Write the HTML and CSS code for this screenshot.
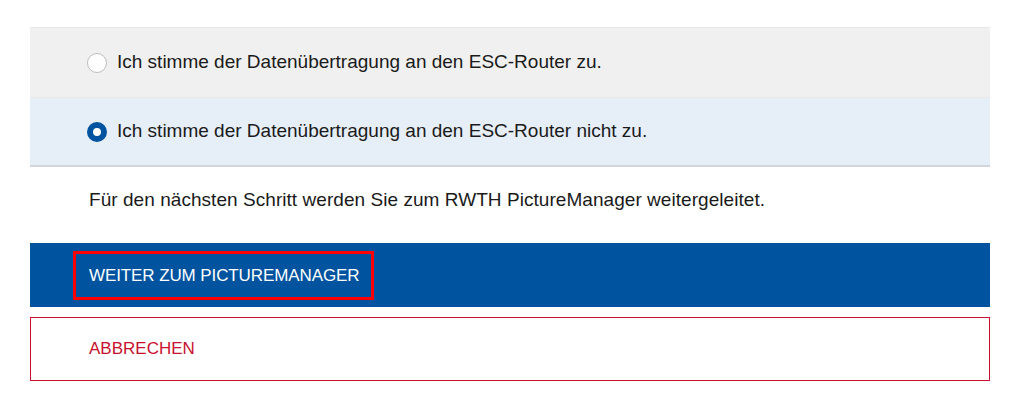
FILE: index.html
```html
<!DOCTYPE html>
<html lang="de">
<head>
<meta charset="utf-8">
<link rel="stylesheet" href="styles.css">
</head>
<body>
<main class="panel">
  <div class="options">
    <label class="option option-off">
      <span class="radio"></span>
      <span class="label-text">Ich stimme der Datenübertragung an den ESC-Router zu.</span>
    </label>
    <label class="option option-on">
      <span class="radio radio-checked"></span>
      <span class="label-text">Ich stimme der Datenübertragung an den ESC-Router nicht zu.</span>
    </label>
  </div>
  <p class="info">Für den nächsten Schritt werden Sie zum RWTH PictureManager weitergeleitet.</p>
  <div class="btn btn-primary"><span class="focus">WEITER ZUM PICTUREMANAGER</span></div>
  <div class="btn btn-cancel"><span class="cancel-text">ABBRECHEN</span></div>
</main>
</body>
</html>
```
FILE: styles.css
```css
html, body {
  margin: 0;
  padding: 0;
  background: #ffffff;
}
body {
  font-family: "Liberation Sans", Arial, sans-serif;
  font-size: 16px;
  color: #1a1a1a;
}
.panel {
  margin: 0 21px 0 30px;
  padding-top: 27px;
}
.options {
  display: flex;
  flex-direction: column;
  border-bottom: 2px solid #d2d6da;
}
.option {
  display: flex;
  align-items: center;
  gap: 10px;
  padding-left: 57px;
}
.option-off {
  background: #f0f0f0;
  border-top: 1px solid #e9e9e9;
  border-bottom: 1px solid #e8e8e8;
  box-sizing: border-box;
  height: 71px;
}
.option-on {
  background: #e6eef8;
  height: 67px;
}
.radio {
  width: 20px;
  height: 20px;
  box-sizing: border-box;
  border-radius: 50%;
  border: 1px solid #bdbdbd;
  background: #ffffff;
  flex: none;
}
.radio-checked {
  border: 6px solid #00539f;
}
.label-text {
  font-size: 19px;
  line-height: 20px;
  padding-bottom: 1px;
}
.info {
  margin: 0;
  padding: 22px 0 0 59px;
  font-size: 19px;
  letter-spacing: 0.05px;
  line-height: 22px;
  height: 54px;
}
.btn {
  display: flex;
  align-items: center;
  box-sizing: border-box;
  font-size: 17px;
}
.btn-primary {
  background: #00539f;
  height: 64px;
  padding-left: 43px;
  color: #ffffff;
}
.focus {
  border: 3px solid #ff0000;
  padding: 12px 12px 12px 13px;
  line-height: 19px;
  letter-spacing: -0.1px;
}
.btn-cancel {
  margin-top: 10px;
  height: 64px;
  border: 1px solid #c8102e;
  padding-left: 58px;
  color: #c8102e;
}
```
